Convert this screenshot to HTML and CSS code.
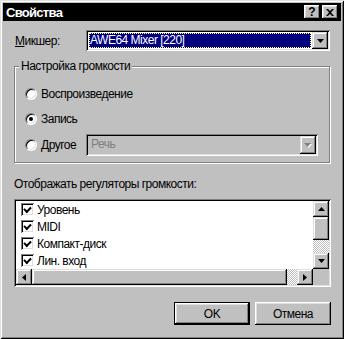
FILE: index.html
```html
<!DOCTYPE html>
<html lang="ru">
<head>
    <meta charset="UTF-8">
    <meta name="viewport" content="width=device-width, initial-scale=1.0">
    <title>Свойства</title>
    <link rel="stylesheet" href="styles.css">
</head>
<body>
    <div class="window">
        <div class="titlebar">
            <span class="title">Свойства</span>
            <div class="title-buttons">
                <button class="tbtn help">?</button>
                <button class="tbtn">
                    <svg width="8" height="7" viewBox="0 0 8 7"><path d="M0 0h2l2 2 2-2h2L5 3.5 8 7H6L4 5 2 7H0l3-3.5z" fill="#000"/></svg>
                </button>
            </div>
        </div>

        <div class="content">
            <div class="mixer-row">
                <label class="mixer-label"><u>М</u>икшер:</label>
                <div class="combo">
                    <div class="combo-field selected"><span>AWE64 Mixer [220]</span></div>
                    <div class="drop-btn">
                        <svg width="7" height="4" viewBox="0 0 7 4"><path d="M0 0h7L3.5 4z" fill="#000"/></svg>
                    </div>
                </div>
            </div>

            <div class="group">
                <span class="group-title">Настройка громкости</span>
                <div class="radio-row">
                    <span class="radio"></span>
                    <span>Воспроизведение</span>
                </div>
                <div class="radio-row">
                    <span class="radio checked"></span>
                    <span>Запись</span>
                </div>
                <div class="radio-row other">
                    <span class="radio"></span>
                    <span class="other-label">Другое</span>
                    <div class="combo disabled">
                        <div class="combo-field"><span>Речь</span></div>
                        <div class="drop-btn">
                            <svg width="8" height="5" viewBox="0 0 8 5"><path d="M1 1h7L4.5 5z" fill="#fff"/><path d="M0 0h7L3.5 4z" fill="#808080"/></svg>
                        </div>
                    </div>
                </div>
            </div>

            <div class="caption">Отображать регуляторы громкости:</div>

            <div class="listbox">
                <div class="items">
                    <div class="item"><span class="check"></span>Уровень</div>
                    <div class="item"><span class="check"></span>MIDI</div>
                    <div class="item"><span class="check"></span>Компакт-диск</div>
                    <div class="item"><span class="check"></span>Лин. вход</div>
                </div>
                <div class="vscroll">
                    <div class="sbtn">
                        <svg width="7" height="4" viewBox="0 0 7 4"><path d="M3.5 0L7 4H0z" fill="#000"/></svg>
                    </div>
                    <div class="thumb-v"></div>
                    <div class="track"></div>
                    <div class="sbtn">
                        <svg width="7" height="4" viewBox="0 0 7 4"><path d="M0 0h7L3.5 4z" fill="#000"/></svg>
                    </div>
                </div>
                <div class="hscroll">
                    <div class="sbtn">
                        <svg width="4" height="7" viewBox="0 0 4 7"><path d="M4 0v7L0 3.5z" fill="#000"/></svg>
                    </div>
                    <div class="thumb-h"></div>
                    <div class="track"></div>
                    <div class="sbtn">
                        <svg width="4" height="7" viewBox="0 0 4 7"><path d="M0 0v7L4 3.5z" fill="#000"/></svg>
                    </div>
                </div>
                <div class="corner"></div>
            </div>

            <div class="buttons">
                <button class="btn default">OK</button>
                <button class="btn">Отмена</button>
            </div>
        </div>
    </div>
</body>
</html>
```

FILE: styles.css
```css
body {
    margin: 0;
    padding: 0;
    background-color: #c0c0c0;
    font-family: 'Liberation Sans', Arial, sans-serif;
    font-size: 12px;
    letter-spacing: -0.5px;
    color: #000;
}
.window {
    width: 344px;
    height: 339px;
    box-sizing: border-box;
    padding: 3px;
    background-color: #c0c0c0;
    box-shadow: inset 1px 1px #dfdfdf, inset -1px -1px #000, inset 2px 2px #fff, inset -2px -2px #808080;
}
.titlebar {
    height: 18px;
    background-color: #000;
    display: flex;
    align-items: center;
    justify-content: space-between;
    padding: 0 3px 0 3px;
}
.title {
    color: #fff;
    font-weight: bold;
    font-size: 13px;
    letter-spacing: -0.7px;
}
.title-buttons {
    display: flex;
    gap: 2px;
}
.tbtn {
    width: 16px;
    height: 14px;
    padding: 0;
    border: none;
    background-color: #c0c0c0;
    box-shadow: inset -1px -1px #000, inset 1px 1px #fff, inset -2px -2px #808080, inset 2px 2px #dfdfdf;
    display: flex;
    align-items: center;
    justify-content: center;
    font-family: 'Liberation Sans', Arial, sans-serif;
    font-weight: bold;
    font-size: 12px;
    line-height: 14px;
}
.content {
    padding: 0 10px 0 11px;
}
.mixer-row {
    display: flex;
    align-items: center;
    margin-top: 9px;
}
.mixer-label {
    width: 71px;
    padding-left: 1px;
}
.combo {
    width: 244px;
    height: 21px;
    box-sizing: border-box;
    padding: 2px;
    background-color: #fff;
    box-shadow: inset 1px 1px #808080, inset -1px -1px #fff, inset 2px 2px #000, inset -2px -2px #dfdfdf;
    display: flex;
}
.combo-field {
    flex: 1;
    padding: 1px;
    display: flex;
}
.combo-field span {
    flex: 1;
    padding-left: 1px;
    line-height: 15px;
}
.combo-field.selected span {
    background-color: #000080;
    color: #fff;
    outline: 1px dotted #ffff80;
    outline-offset: -1px;
}
.drop-btn {
    width: 16px;
    background-color: #c0c0c0;
    box-shadow: inset -1px -1px #000, inset 1px 1px #dfdfdf, inset -2px -2px #808080, inset 2px 2px #fff;
    display: flex;
    align-items: center;
    justify-content: center;
}
.combo.disabled {
    width: 232px;
    height: 22px;
    background-color: #c0c0c0;
}
.combo.disabled .combo-field span {
    color: #808080;
    padding-left: 2px;
}
.group {
    position: relative;
    margin-top: 15px;
    width: 316px;
    height: 97px;
    box-sizing: border-box;
    border: 1px solid #808080;
    box-shadow: inset 1px 1px #fff, 1px 1px #fff;
    padding: 14px 0 0 10px;
}
.group-title {
    position: absolute;
    top: -8px;
    left: 4px;
    padding: 0 2px;
    background-color: #c0c0c0;
}
.radio-row {
    display: flex;
    align-items: center;
    gap: 4px;
    height: 25px;
}
.radio-row.other {
    margin-top: 3px;
    height: 22px;
}
.other-label {
    width: 41px;
}
.radio {
    width: 12px;
    height: 12px;
    box-sizing: border-box;
    border-radius: 50%;
    background-color: #fff;
    border: 1px solid;
    border-color: #808080 #fff #fff #808080;
    box-shadow: inset 1px 1px #000, inset -1px -1px #dfdfdf;
    display: flex;
    align-items: center;
    justify-content: center;
}
.radio.checked::after {
    content: "";
    width: 4px;
    height: 4px;
    border-radius: 50%;
    background-color: #000;
}
.caption {
    margin-top: 14px;
    line-height: 14px;
}
.listbox {
    margin-top: 8px;
    width: 317px;
    height: 88px;
    box-sizing: border-box;
    padding: 2px;
    background-color: #fff;
    box-shadow: inset 1px 1px #808080, inset -1px -1px #fff, inset 2px 2px #000, inset -2px -2px #dfdfdf;
    display: grid;
    grid-template-columns: 1fr 16px;
    grid-template-rows: 1fr 16px;
}
.items {
    overflow: hidden;
}
.item {
    height: 17px;
    display: flex;
    align-items: center;
    padding-left: 5px;
    gap: 3px;
}
.check {
    width: 13px;
    height: 13px;
    box-sizing: border-box;
    background-color: #fff;
    box-shadow: inset 1px 1px #808080, inset -1px -1px #fff, inset 2px 2px #000, inset -2px -2px #dfdfdf;
    position: relative;
}
.check::after {
    content: "";
    position: absolute;
    left: 3px;
    top: 2px;
    width: 5px;
    height: 3px;
    border-left: 2px solid #000;
    border-bottom: 2px solid #000;
    transform: rotate(-45deg) translate(-1px, 1px);
}
.vscroll {
    display: flex;
    flex-direction: column;
}
.hscroll {
    display: flex;
}
.sbtn {
    width: 16px;
    height: 16px;
    flex: none;
    background-color: #c0c0c0;
    box-shadow: inset -1px -1px #000, inset 1px 1px #dfdfdf, inset -2px -2px #808080, inset 2px 2px #fff;
    display: flex;
    align-items: center;
    justify-content: center;
}
.thumb-v {
    height: 23px;
    flex: none;
    background-color: #c0c0c0;
    box-shadow: inset -1px -1px #000, inset 1px 1px #dfdfdf, inset -2px -2px #808080, inset 2px 2px #fff;
}
.thumb-h {
    flex: 1;
    background-color: #c0c0c0;
    box-shadow: inset -1px -1px #000, inset 1px 1px #dfdfdf, inset -2px -2px #808080, inset 2px 2px #fff;
}
.hscroll .track {
    width: 10px;
    flex: none;
}
.vscroll .track {
    flex: 1;
}
.track {
    background: repeating-conic-gradient(#c0c0c0 0 25%, #fff 0 50%) 0 0 / 2px 2px;
}
.corner {
    background-color: #c0c0c0;
}
.buttons {
    display: flex;
    justify-content: flex-end;
    gap: 5px;
    margin-top: 15px;
}
.btn {
    width: 76px;
    height: 23px;
    padding: 0;
    border: none;
    background-color: #c0c0c0;
    font-family: 'Liberation Sans', Arial, sans-serif;
    font-size: 12px;
    letter-spacing: -0.5px;
    color: #000;
    box-shadow: inset -1px -1px #000, inset 1px 1px #fff, inset -2px -2px #808080, inset 2px 2px #dfdfdf;
}
.btn.default {
    box-shadow: inset 0 0 0 1px #000, inset -2px -2px #000, inset 2px 2px #fff, inset -3px -3px #808080, inset 3px 3px #dfdfdf;
}
```
